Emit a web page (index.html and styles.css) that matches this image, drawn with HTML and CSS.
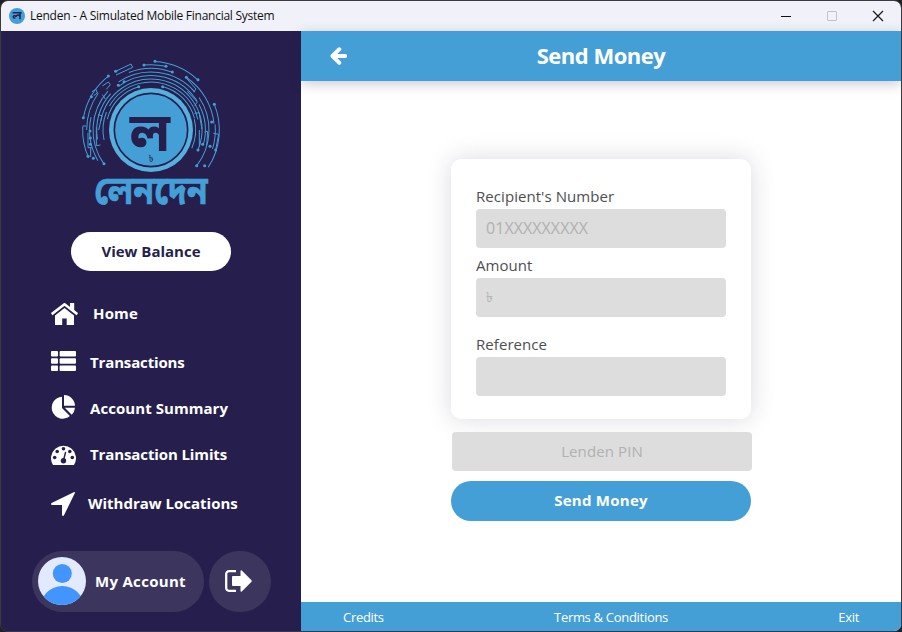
FILE: index.html
```html
<!DOCTYPE html>
<html lang="en">
<head>
<meta charset="utf-8">
<title>Lenden - A Simulated Mobile Financial System</title>
<link rel="stylesheet" href="styles.css">
</head>
<body>
<div class="window">
  <header class="titlebar">
    <svg class="app-icon" viewBox="0 0 16 16"><circle cx="8" cy="8" r="8" fill="#459fd7"/><path d="M3.6 4.8h9M11 4.8v6.4M11 8.2C9 6.4 7.2 7 7 9M7.200 9C6.700 7 4 7.300 4.300 9.200 4.500 10.400 5.800 10.200 6 9.500" fill="none" stroke="#261f4d" stroke-width="1.5"/></svg>
    <span class="app-title">Lenden - A Simulated Mobile Financial System</span>
    <div class="controls">
      <svg viewBox="0 0 10 10"><path d="M0 5.500h10" stroke="#111"/></svg>
      <svg viewBox="0 0 10 10"><rect x=".5" y=".5" width="9" height="9" rx=".5" fill="none" stroke="#c3c3c9"/></svg>
      <svg viewBox="0 0 10 10"><path d="M0 0l10 10M10 0L0 10" stroke="#111" stroke-width="1.100"/></svg>
    </div>
  </header>
  <div class="body">
    <aside class="sidebar">
      <svg class="logo" viewBox="0 0 480 516">
        <g fill="none" stroke="#459fd7" stroke-width="3">
          <circle cx="243" cy="240" r="206" pathLength="360" stroke-dasharray="40 320" transform="rotate(-87 243 240)"/>
          <circle cx="243" cy="240" r="196" pathLength="360" stroke-dasharray="19 341" transform="rotate(-96 243 240)"/>
          <circle cx="243" cy="240" r="206" pathLength="360" stroke-dasharray="42 318" transform="rotate(-170 243 240)"/>
          <circle cx="243" cy="240" r="205" pathLength="360" stroke-dasharray="27 333" transform="rotate(156 243 240)"/>
          <circle cx="243" cy="240" r="205" pathLength="360" stroke-dasharray="55 305" transform="rotate(-22 243 240)"/>
          <circle cx="243" cy="240" r="190" pathLength="360" stroke-dasharray="50 310" transform="rotate(-56 243 240)"/>
          <circle cx="243" cy="240" r="193" pathLength="360" stroke-dasharray="35 325" transform="rotate(-180 243 240)"/>
          <circle cx="243" cy="240" r="193" pathLength="360" stroke-dasharray="22 338" transform="rotate(-5 243 240)"/>
          <circle cx="243" cy="240" r="185" pathLength="360" stroke-dasharray="42 318" transform="rotate(-111 243 240)"/>
          <circle cx="243" cy="240" r="184" pathLength="360" stroke-dasharray="42 318" transform="rotate(150 243 240)"/>
          <circle cx="243" cy="240" r="174" pathLength="360" stroke-dasharray="83 277" transform="rotate(-124 243 240)"/>
          <circle cx="243" cy="240" r="174" pathLength="360" stroke-dasharray="78 282" transform="rotate(144 243 240)"/>
          <circle cx="243" cy="240" r="174" pathLength="360" stroke-dasharray="72 288" transform="rotate(-34 243 240)"/>
          <circle cx="243" cy="240" r="163" pathLength="360" stroke-dasharray="94 266" transform="rotate(-126 243 240)"/>
          <circle cx="243" cy="240" r="163" pathLength="360" stroke-dasharray="52 308" transform="rotate(170 243 240)"/>
          <circle cx="243" cy="240" r="163" pathLength="360" stroke-dasharray="44 316" transform="rotate(-28 243 240)"/>
          <circle cx="243" cy="240" r="153" pathLength="360" stroke-dasharray="193 167" transform="rotate(-170 243 240)"/>
          <circle cx="243" cy="240" r="144" pathLength="360" stroke-dasharray="137 223" transform="rotate(-150 243 240)"/>
          <circle cx="243" cy="240" r="135" pathLength="360" stroke-dasharray="60 300" transform="rotate(-166 243 240)"/>
          <circle cx="243" cy="240" r="135" pathLength="360" stroke-dasharray="60 300" transform="rotate(-75 243 240)"/>
          <circle cx="243" cy="240" r="144" pathLength="360" stroke-dasharray="34 326" transform="rotate(168 243 240)"/>
          <circle cx="243" cy="240" r="134" pathLength="360" stroke-dasharray="38 322" transform="rotate(-14 243 240)"/>
          <path d="M137 64L183 42 188 52 138 75M38 228h11M66 125l12-7 4 11-11 8M97 108l18-12 6 8-12 14M97 134l9 13M347 82l31 35-7 9M352 124l30 32-8 11M373 190l14-2 9 50M84 194l12 3-10 43M54 248v45h13M62 293v28M79 232v55l12-2M388 240v46M404 246l9-2-3 43M430 250l16 3-9 47"/>
        </g>
        <g fill="#459fd7">
          <circle cx="255" cy="34" r="4.500"/><circle cx="384" cy="89" r="4.500"/><circle cx="222" cy="45" r="4.500"/><circle cx="288" cy="49" r="4.500"/><circle cx="137" cy="64" r="4.500"/><circle cx="115" cy="78" r="4.500"/><circle cx="64" cy="140" r="4.500"/><circle cx="40" cy="203" r="4.500"/><circle cx="70" cy="325" r="4.500"/><circle cx="102" cy="341" r="4.500"/><circle cx="54" cy="319" r="4.500"/><circle cx="61" cy="264" r="4.500"/><circle cx="61" cy="283" r="4.500"/><circle cx="60" cy="243" r="4.500"/><circle cx="162" cy="95" r="4.500"/><circle cx="145" cy="106" r="4.500"/><circle cx="206" cy="110" r="4.500"/><circle cx="278" cy="110" r="4.500"/><circle cx="307" cy="66" r="4.500"/><circle cx="349" cy="82" r="4.500"/><circle cx="433" cy="163" r="4.500"/><circle cx="425" cy="216" r="4.500"/><circle cx="437" cy="300" r="4.500"/><circle cx="420" cy="289" r="4.500"/><circle cx="398" cy="283" r="4.500"/><circle cx="384" cy="300" r="4.500"/><circle cx="380" cy="347" r="4.500"/><circle cx="404" cy="347" r="4.500"/>
        </g>
        <circle cx="243" cy="240" r="126" fill="#55b0dd"/>
        <circle cx="243" cy="240" r="110" fill="#459fd7" stroke="#261f4d" stroke-width="5"/>
        <text class="mark" x="240" y="302" text-anchor="middle">ল</text>
        <text class="taka" x="243" y="336" text-anchor="middle">৳</text>
        <text class="wordmark" transform="translate(243 461) scale(1 1.150)" text-anchor="middle">লেনদেন</text>
      </svg>
      <button class="balance">View Balance</button>
      <nav class="nav">
        <a class="item home"><svg width="27" height="22" viewBox="0 0 27 22"><path d="M.7 11.200L13.500 1.300 26.300 11.200" fill="none" stroke="#fff" stroke-width="2.600"/><path d="M19 0h4.200v8L19 4.700zM4 12.500l9.500-7.600 9.500 7.600V22h-7.300v-6.500h-4.500V22H4z" fill="#fff"/><path d="M2.500 12.500l11-8.600 11 8.600" fill="none" stroke="#261f4d" stroke-width=".9"/></svg><span>Home</span></a>
        <a class="item list"><svg width="25" height="20" viewBox="0 0 25 20" fill="#fff"><rect width="7" height="5.500" rx="1"/><rect x="8.600" width="16.400" height="5.500" rx="1"/><rect y="7.200" width="7" height="5.500" rx="1"/><rect x="8.600" y="7.200" width="16.400" height="5.500" rx="1"/><rect y="14.400" width="7" height="5.500" rx="1"/><rect x="8.600" y="14.400" width="16.400" height="5.500" rx="1"/></svg><span>Transactions</span></a>
        <a class="item pie"><svg width="24" height="24" viewBox="0 0 24 24" fill="#fff"><path d="M11 1.700V13l7.900 8A11 11 0 1 1 11 1.700zM13 0a11 11 0 0 1 11 10.800H13zM13.800 12.800H24a11 11 0 0 1-3.300 7z"/></svg><span>Account Summary</span></a>
        <a class="item gauge"><svg width="25" height="20" viewBox="0 0 25 20"><path d="M2 20A12.500 12.500 0 1 1 23 20z" fill="#fff"/><g fill="#261f4d"><circle cx="3.700" cy="12.500" r="1.800"/><circle cx="6.200" cy="6.500" r="1.800"/><circle cx="12.500" cy="3.800" r="1.800"/><circle cx="18.800" cy="6.500" r="1.800"/><circle cx="21.300" cy="12.500" r="1.800"/><circle cx="12.500" cy="15.800" r="2.700"/></g><path d="M12.600 15L14.500 7.500" stroke="#261f4d" stroke-width="1.400" stroke-linecap="round"/></svg><span>Transaction Limits</span></a>
        <a class="item place"><svg width="24" height="24" viewBox="0 0 24 24"><path d="M23.200.1Q24.200 0 23.900 1L13 23.300Q12 24.500 11 23.300V13H.8Q-.6 12 .6 11z" fill="#fff"/></svg><span>Withdraw Locations</span></a>
      </nav>
      <div class="account">
        <button class="profile"><svg width="48" height="48" viewBox="0 0 48 48"><clipPath id="face"><circle cx="24" cy="24" r="24"/></clipPath><g clip-path="url(#face)"><path d="M0 0h48v48H0z" fill="#e3eaff"/><circle cx="24.300" cy="16.500" r="9.500" fill="#4294ff"/><circle cx="24.300" cy="51" r="22" fill="#4294ff"/></g></svg><span>My Account</span></button>
        <button class="logout"><svg width="27" height="22" viewBox="0 0 27 22"><path d="M11 1.200H4A2.800 2.800 0 0 0 1.200 4v14A2.800 2.800 0 0 0 4 20.800h7" fill="none" stroke="#fff" stroke-width="2.300"/><path d="M8 6h7.500V.8Q16 0 16.800.5L26.500 10.300Q27 11 26.500 11.700L16.800 21.500Q16 22 15.500 21.200V16H8Q7 16 7 15V7Q7 6 8 6z" fill="#fff"/></svg></button>
      </div>
    </aside>
    <section class="content">
      <header class="topbar">
        <svg class="back" width="17" height="18" viewBox="0 0 17 18"><path d="M9.300 2.200L2.500 9l6.800 6.800M3 9h12.200" fill="none" stroke="#fff" stroke-width="3.900" stroke-linecap="round" stroke-linejoin="round"/></svg>
        <h1>Send Money</h1>
      </header>
      <main class="form">
        <div class="card">
          <label>Recipient's Number</label>
          <div class="field"><span class="number">01XXXXXXXXX</span></div>
          <label>Amount</label>
          <div class="field amount"><span class="currency">৳</span></div>
          <label>Reference</label>
          <div class="field"></div>
        </div>
        <div class="field pin"><span>Lenden PIN</span></div>
        <button class="send">Send Money</button>
      </main>
      <footer class="footer"><a class="credits">Credits</a><a class="terms">Terms &amp; Conditions</a><a class="exit">Exit</a></footer>
    </section>
  </div>
</div>
</body>
</html>
```
FILE: styles.css
```css
* { box-sizing: border-box; }
body { margin: 0; width: 902px; height: 632px; overflow: hidden; background: #202022; font-family: "Open Sans", "Noto Sans", sans-serif; color: #fff; }
button { border: 0; padding: 0; font: inherit; color: inherit; }
svg { display: block; flex: none; }
.window { width: 902px; height: 632px; border: 1px solid #3c3a40; border-radius: 8px; overflow: hidden; display: flex; flex-direction: column; }
.titlebar { height: 30px; flex: none; background: #f1f2f9; display: flex; align-items: center; padding: 0 18px 0 8px; color: #111; }
.app-icon { width: 16px; height: 16px; margin-right: 5px; }
.app-title { font-size: 12px; line-height: 16px; letter-spacing: -.26px; white-space: nowrap; }
.controls { margin-left: auto; display: flex; gap: 35px; }
.controls svg { width: 10px; height: 10px; overflow: visible; }
.controls svg:first-child { margin-right: 1px; }
.controls svg:nth-child(2) { margin-right: 1px; }
.body { display: flex; flex: 1; min-height: 0; }
.sidebar { width: 300px; background: #261f4d; display: flex; flex-direction: column; }
.logo { width: 160px; height: 172px; margin: 19px 0 0 69px; }
.mark, .taka, .wordmark { font-family: "Noto Sans Bengali", "Noto Sans", sans-serif; font-weight: 700; fill: #261f4d; }
.mark { font-size: 160px; }
.taka { font-size: 26px; font-weight: 400; }
.wordmark { font-size: 101px; fill: #459fd7; stroke: #459fd7; stroke-width: 1.5px; }
.balance { width: 160px; height: 39px; margin: 10px 0 1px 70px; flex: none; border-radius: 20px; background: #fff; color: #261f4d; font-size: 15px; font-weight: 700; }
.balance, .send { padding-bottom: 2px; }
.nav { margin-top: 19px; padding-left: 50px; font-size: 15px; font-weight: 700; white-space: nowrap; }
.item { display: flex; align-items: center; height: 46px; }
.home { gap: 15px; margin-bottom: 1px; letter-spacing: .15px; }
.home span { padding-bottom: 2px; }
.list { gap: 14px; letter-spacing: -.14px; }
.list span, .pie span { padding-top: 2px; }
.pie { gap: 15px; letter-spacing: .06px; }
.gauge { gap: 14px; margin-top: 2px; letter-spacing: -.11px; }
.gauge span, .place span { padding-bottom: 2px; }
.place { height: 52px; gap: 13px; }
.account { display: flex; gap: 5px; margin: auto 0 19px 31px; }
.profile { width: 172px; height: 61px; border-radius: 31px; background: #3c365f; display: flex; align-items: center; gap: 9px; padding: 0 0 1px 6px; font-size: 15px; letter-spacing: .3px; font-weight: 700; white-space: nowrap; }
.profile span { padding-bottom: 1px; }
.logout { width: 62px; height: 61px; border-radius: 31px; background: #3c365f; display: grid; place-items: center; padding: 0 3px 2px 0; }
.content { width: 600px; background: #fff; display: flex; flex-direction: column; }
.topbar { height: 50px; flex: none; background: #459fd7; box-shadow: 0 3px 12px rgba(38,31,77,.24); display: grid; grid-template-columns: 30px 1fr 30px; align-items: center; }
.back { margin-left: 29px; }
h1 { margin: 0; padding-bottom: 2px; text-align: center; font-size: 22px; line-height: 30px; font-weight: 700; letter-spacing: -.5px; }
.form { flex: 1; display: flex; flex-direction: column; align-items: center; padding-top: 78px; color: #4e4e52; }
.card { width: 300px; height: 260px; flex: none; border-radius: 10px; background: #fff; padding: 25px; box-shadow: 0 0 24px rgba(38,31,77,.17); }
label { display: block; height: 25px; line-height: 25px; font-size: 15px; letter-spacing: .06px; }
.field { height: 39px; border-radius: 4px; background: #ddd; color: #b1b1b1; display: flex; align-items: center; padding: 0 0 2px 10px; margin-bottom: 5px; font-size: 15px; }
.number { font-size: 16px; letter-spacing: .05px; }
.amount { margin-bottom: 15px; padding-bottom: 0; }
.currency { font-size: 14px; }
.pin { width: 300px; flex: none; margin: 13px 0 10px 2px; padding: 0 0 2px; justify-content: center; letter-spacing: .1px; }
.send { width: 300px; height: 40px; border-radius: 20px; background: #459fd7; color: #fff; font-weight: 700; font-size: 15px; letter-spacing: .25px; }
.footer { height: 29px; flex: none; background: #459fd7; display: grid; grid-template-columns: 1fr auto 1fr; align-items: center; padding: 0 42px; font-size: 13px; letter-spacing: -.3px; }
.terms { margin-left: 20px; }
.exit { text-align: right; }
```
